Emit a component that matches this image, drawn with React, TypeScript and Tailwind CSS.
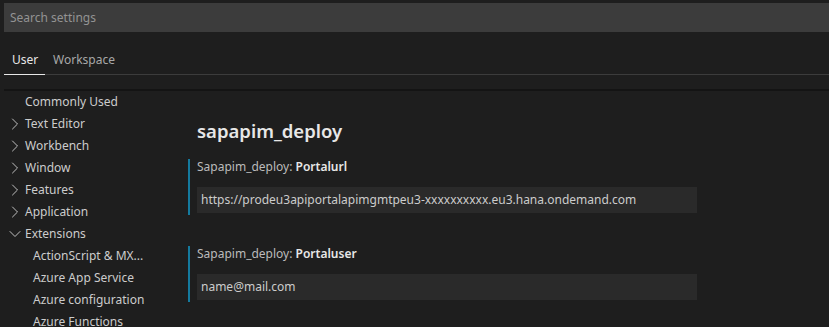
import { ChevronRight, ChevronDown } from 'lucide-react';

const font = { fontFamily: '"Noto Sans", "Open Sans", sans-serif' };

const treeItems = [
  { label: 'Commonly Used', level: 0, chevron: null },
  { label: 'Text Editor', level: 0, chevron: 'right' },
  { label: 'Workbench', level: 0, chevron: 'right' },
  { label: 'Window', level: 0, chevron: 'right' },
  { label: 'Features', level: 0, chevron: 'right' },
  { label: 'Application', level: 0, chevron: 'right' },
  { label: 'Extensions', level: 0, chevron: 'down' },
  { label: 'ActionScript & MX...', level: 1, chevron: null },
  { label: 'Azure App Service', level: 1, chevron: null },
  { label: 'Azure configuration', level: 1, chevron: null },
  { label: 'Azure Functions', level: 1, chevron: null },
];

function Setting(props: { name: string; value: string }) {
  return (
    <div className="border-l-2 border-[#147a9e] pl-[7px] h-[56px] w-[509px]">
      <div className="text-[12px] leading-[16px] text-[#bbbbbb] -mt-[1px]">
        Sapapim_deploy: <span className="font-semibold text-[#e7e7e7]">{props.name}</span>
      </div>
      <div className="mt-[12px] h-[26px] bg-[#2a2a2a] text-[12px] text-[#cccccc] flex items-center pl-[4px]">
        {props.value}
      </div>
    </div>
  );
}

export default function App() {
  return (
    <div className="w-[829px] h-[327px] bg-[#1e1e1e] overflow-hidden" style={font}>
      <div className="pt-[3px] pl-[4px]">
        <div className="h-[29px] bg-[#3c3c3c] flex items-center pl-[6px] text-[12px] text-[#939393]">
          Search settings
        </div>
      </div>

      <div className="mt-[12px] ml-[4px] flex items-end border-b border-[#3c3c3c] h-[31px]">
        <div className="px-[8px] pb-[6px] text-[12px] leading-[16px] text-[#e7e7e7] border-b border-[#e7e7e7] -mb-[1px] w-[41px]">
          User
        </div>
        <div className="px-[8px] pb-[6px] text-[12px] leading-[16px] text-[#a8a8a8]">Workspace</div>
      </div>

      <div className="ml-[4px] mt-[14px] h-[2px] bg-[#141414]" />

      <div className="flex">
        <div className="w-[188px] shrink-0">
          {treeItems.map((item) => (
            <div key={item.label} className="h-[22px] flex items-center text-[12px] text-[#cccccc]">
              <div className="w-[25px] flex justify-start pl-[5px] text-[#c5c5c5]">
                {item.chevron === 'right' && <ChevronRight size={20} strokeWidth={1.15} />}
                {item.chevron === 'down' && <ChevronDown size={20} strokeWidth={1.15} />}
              </div>
              <span className={item.level === 1 ? 'pl-[8px]' : ''}>{item.label}</span>
            </div>
          ))}
        </div>

        <div className="pt-[28px]">
          <div className="pl-[9px] text-[18.5px] font-semibold text-[#e7e7e7] leading-[24px]">sapapim_deploy</div>
          <div className="mt-[17px]">
            <Setting name="Portalurl" value="https://prodeu3apiportalapimgmtpeu3-xxxxxxxxxx.eu3.hana.ondemand.com" />
          </div>
          <div className="mt-[32px]">
            <Setting name="Portaluser" value="name@mail.com" />
          </div>
        </div>
      </div>
    </div>
  );
}
